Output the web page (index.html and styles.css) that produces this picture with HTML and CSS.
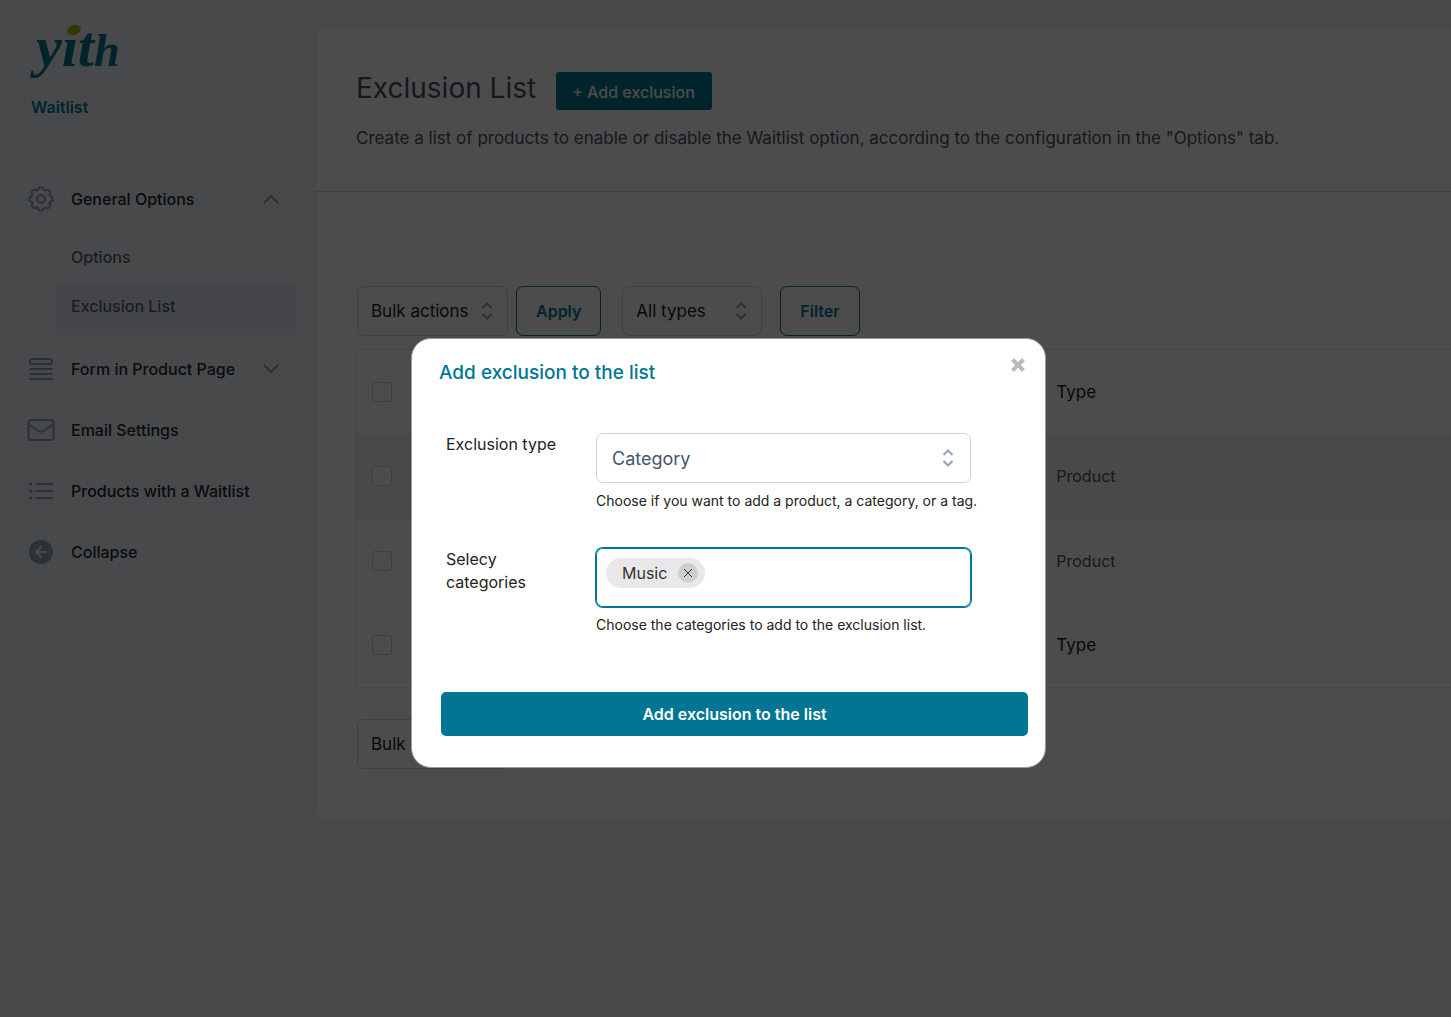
FILE: index.html
```html
<!DOCTYPE html>
<html lang="en">
<head>
    <meta charset="UTF-8">
    <meta name="viewport" content="width=device-width, initial-scale=1.0">
    <title>YITH Waitlist - Exclusion List</title>
    <link rel="stylesheet" href="styles.css">
</head>
<body>

    <div class="page">
        <!-- Sidebar -->
        <aside class="sidebar">
            <svg class="logo" width="94" height="60" viewBox="0 0 94 60">
                <text class="logo-text" x="8" y="39">yit<tspan class="logo-small">h</tspan></text>
                <ellipse cx="46" cy="3" rx="7" ry="5" transform="rotate(-20 46 3)" fill="#a4c400"/>
            </svg>
            <div class="plugin-name">Waitlist</div>

            <nav class="menu">
                <a href="#" class="menu-item">
                    <svg class="menu-icon" width="28" height="28" viewBox="-14 -14 28 28">
                        <path d="M-3-9-1.800-11.500H1.800L3-9 4.200-8.500 7-9.400 9.400-7 8.500-4.200 9-3 11.500-1.800V1.800L9 3 8.500 4.200 9.400 7 7 9.400 4.200 8.500 3 9 1.800 11.500H-1.800L-3 9-4.200 8.500-7 9.400-9.400 7-8.500 4.200-9 3-11.500 1.800V-1.800L-9-3-8.500-4.200-9.400-7-7-9.400-4.200-8.500z"/>
                        <circle r="4"/>
                    </svg>
                    <span>General Options</span>
                    <svg class="arrow" width="16" height="10" viewBox="0 0 16 10"><path d="M1.500 8.500 8 2l6.500 6.500"/></svg>
                </a>
                <div class="submenu">
                    <a href="#">Options</a>
                    <a href="#" class="active">Exclusion List</a>
                </div>
                <a href="#" class="menu-item">
                    <svg class="menu-icon" width="28" height="28" viewBox="0 0 28 28">
                        <rect x="3" y="4" width="22" height="5" rx="2"/>
                        <path d="M3 14h22M3 19h22M3 24h22"/>
                    </svg>
                    <span>Form in Product Page</span>
                    <svg class="arrow" width="16" height="10" viewBox="0 0 16 10"><path d="M1.500 1.500 8 8l6.500-6.500"/></svg>
                </a>
                <a href="#" class="menu-item">
                    <svg class="menu-icon" width="28" height="28" viewBox="0 0 28 28">
                        <rect x="1.500" y="4" width="25" height="20" rx="2.500"/>
                        <path d="M2 8.500l9.500 6.500q2.500 1.600 5 0L26 8.500"/>
                    </svg>
                    <span>Email Settings</span>
                </a>
                <a href="#" class="menu-item">
                    <svg class="menu-icon" width="28" height="28" viewBox="0 0 28 28">
                        <path d="M9 7h16M9 14h16M9 21h16"/>
                        <path d="M3.500 7h.5M3.500 14h.5M3.500 21h.5" stroke-width="3"/>
                    </svg>
                    <span>Products with a Waitlist</span>
                </a>
                <a href="#" class="menu-item">
                    <svg class="menu-icon" width="28" height="28" viewBox="0 0 28 28">
                        <circle cx="14" cy="14" r="12" fill="#94a3b8" stroke="none"/>
                        <path d="M19 14H9.500M14 9l-5 5 5 5" stroke="#f1f5f9"/>
                    </svg>
                    <span>Collapse</span>
                </a>
            </nav>
        </aside>

        <!-- Main panel -->
        <main class="panel">
            <header class="panel-header">
                <div class="title-row">
                    <h1>Exclusion List</h1>
                    <button class="add-button">+ Add exclusion</button>
                </div>
                <p>Create a list of products to enable or disable the Waitlist option, according to the configuration in the "Options" tab.</p>
            </header>

            <div class="panel-body">
                <div class="toolbar">
                    <div class="select-wrap bulk">
                        <select aria-label="Bulk actions"><option>Bulk actions</option></select>
                        <svg class="updown" width="12" height="18" viewBox="0 0 12 18"><path d="M1.500 6 6 1.500 10.500 6M1.500 12 6 16.500 10.500 12"/></svg>
                    </div>
                    <button class="outline-button apply">Apply</button>
                    <div class="select-wrap types">
                        <select aria-label="Type"><option>All types</option></select>
                        <svg class="updown" width="12" height="18" viewBox="0 0 12 18"><path d="M1.500 6 6 1.500 10.500 6M1.500 12 6 16.500 10.500 12"/></svg>
                    </div>
                    <button class="outline-button">Filter</button>
                </div>

                <table class="list">
                    <thead>
                        <tr>
                            <th class="col-check"><input type="checkbox" aria-label="Select all"></th>
                            <th class="col-name"></th>
                            <th>Type</th>
                        </tr>
                    </thead>
                    <tbody>
                        <tr class="striped">
                            <td><input type="checkbox" aria-label="Select row"></td>
                            <td></td>
                            <td>Product</td>
                        </tr>
                        <tr>
                            <td><input type="checkbox" aria-label="Select row"></td>
                            <td></td>
                            <td>Product</td>
                        </tr>
                    </tbody>
                    <tfoot>
                        <tr>
                            <th><input type="checkbox" aria-label="Select all"></th>
                            <th></th>
                            <th>Type</th>
                        </tr>
                    </tfoot>
                </table>

                <div class="toolbar">
                    <div class="select-wrap bulk">
                        <select aria-label="Bulk actions"><option>Bulk actions</option></select>
                    </div>
                </div>
            </div>
        </main>
    </div>

    <!-- Add exclusion modal -->
    <div class="overlay">
        <form class="modal" role="dialog" aria-labelledby="modalTitle">
            <div class="modal-header">
                <h2 id="modalTitle">Add exclusion to the list</h2>
                <button type="button" class="close" aria-label="Close">
                    <svg width="16" height="16" viewBox="0 0 16 16"><path d="M2.500 2.500l11 11M13.500 2.500l-11 11"/></svg>
                </button>
            </div>

            <div class="field">
                <label for="exclusionType">Exclusion type</label>
                <div class="control">
                    <div class="select-wrap">
                        <select id="exclusionType"><option>Category</option></select>
                        <svg class="updown" width="12" height="18" viewBox="0 0 12 18"><path d="M1.500 6 6 1.500 10.500 6M1.500 12 6 16.500 10.500 12"/></svg>
                    </div>
                    <p class="hint">Choose if you want to add a product, a category, or a tag.</p>
                </div>
            </div>

            <div class="field">
                <label for="categories">Selecy categories</label>
                <div class="control">
                    <div class="tag-box">
                        <span class="tag">Music
                            <button type="button" aria-label="Remove">
                                <svg width="10" height="10" viewBox="0 0 10 10"><path d="M1 1l8 8M9 1 1 9"/></svg>
                            </button>
                        </span>
                        <input type="text" id="categories">
                    </div>
                    <p class="hint">Choose the categories to add to the exclusion list.</p>
                </div>
            </div>

            <button type="submit" class="submit">Add exclusion to the list</button>
        </form>
    </div>

</body>
</html>
```
FILE: styles.css
```css
* {
    margin: 0;
    padding: 0;
    box-sizing: border-box;
}

body {
    min-height: 100vh;
    background-color: #f1f5f9;
    font-family: Inter, "Liberation Sans", sans-serif;
    font-size: 16px;
    color: #222;
    overflow-x: hidden;
}

button, input, select {
    font: inherit;
    color: inherit;
}

button {
    cursor: pointer;
}

a {
    color: inherit;
    text-decoration: none;
}

.page {
    display: flex;
    align-items: flex-start;
    padding-top: 27px;
}

/* Sidebar */
.sidebar {
    flex: 0 0 315px;
    padding-right: 19px;
}

.logo {
    display: block;
    margin-left: 28px;
    overflow: visible;
}

.logo-text {
    font-family: "Liberation Serif", serif;
    font-size: 58px;
    font-weight: bold;
    font-style: italic;
    fill: #007694;
}

.logo-small {
    font-size: 46px;
}

.plugin-name {
    margin: 10px 0 51px 31px;
    line-height: 20px;
    font-weight: 600;
    color: #007694;
}

.menu-item {
    display: flex;
    align-items: center;
    gap: 16px;
    height: 61px;
    padding: 0 17px 0 27px;
    font-weight: 500;
    color: #1e293b;
}

.menu-icon {
    fill: none;
    stroke: #94a3b8;
    stroke-width: 2;
    stroke-linecap: round;
    stroke-linejoin: round;
}

.arrow {
    margin-left: auto;
    fill: none;
    stroke: #94a3b8;
    stroke-width: 2;
    stroke-linecap: round;
}

.submenu {
    display: flex;
    flex-direction: column;
    gap: 3px;
    padding: 5px 0 9px 56px;
    font-weight: 500;
    color: #566377;
}

.submenu a {
    padding: 0 15px;
    line-height: 46px;
}

.submenu .active {
    background-color: #e4e8f0;
}

/* Main panel */
.panel {
    flex: 1;
    background-color: #fff;
    border: 1px solid #e2e8f0;
    border-right: none;
    border-radius: 10px 0 0 10px;
}

.panel-header {
    padding: 44px 40px 41px;
    border-bottom: 1px solid #cbd5e1;
    color: #475569;
}

.title-row {
    display: flex;
    gap: 20px;
    margin-bottom: 16px;
}

h1 {
    line-height: 32px;
    font-size: 28px;
    font-weight: 400;
}

.add-button {
    height: 38px;
    padding: 2px 17px 0 16px;
    background-color: #007694;
    color: #fff;
    border: none;
    border-radius: 3px;
    font-weight: 500;
}

.panel-header p {
    line-height: 24px;
    font-size: 17px;
}

.panel-body {
    padding: 94px 0 52px 40px;
}

.toolbar {
    display: flex;
    gap: 8px;
    padding-left: 1px;
    font-size: 17px;
}

.select-wrap {
    position: relative;
}

.select-wrap select {
    width: 100%;
    height: 50px;
    padding: 0 13px;
    appearance: none;
    background-color: #fff;
    border: 1px solid #cbd5e1;
    border-radius: 7px;
}

.updown {
    position: absolute;
    top: 16px;
    right: 15px;
    fill: none;
    stroke: #94a3b8;
    stroke-width: 2;
    pointer-events: none;
}

.bulk {
    width: 151px;
}

.types {
    width: 140px;
    margin-right: 10px;
}

.outline-button {
    height: 50px;
    padding: 0 19px;
    background-color: #fff;
    border: 1px solid #007694;
    border-radius: 7px;
    font-size: 16px;
    font-weight: 600;
    color: #007694;
}

.apply {
    margin-right: 13px;
}

.list {
    width: 100%;
    margin: 13px 0 31px;
    table-layout: fixed;
    border-collapse: collapse;
    border: 1px solid #e5e7eb;
    border-right: none;
}

.list th,
.list td {
    height: 84px;
    padding: 0 15px;
    text-align: left;
    font-weight: 400;
}

.list td {
    height: 85px;
    color: #555;
}

.list .col-check {
    width: 50px;
}

.list .col-name {
    width: 58%;
}

.list th {
    font-size: 17px;
}

.striped {
    background-color: #f3f3f3;
}

.list input {
    display: block;
    width: 20px;
    height: 20px;
    appearance: none;
    background-color: #fff;
    border: 1px solid #cbd5e1;
    border-radius: 3px;
}

/* Modal */
.overlay {
    position: fixed;
    inset: 0;
    display: flex;
    justify-content: center;
    align-items: flex-start;
    padding: 338px 0 0 6px;
    background-color: rgba(0, 0, 0, 0.7);
}

.modal {
    width: 635px;
    padding: 14px 17px 31px 29px;
    background-color: #fff;
    border: 1px solid #999;
    border-radius: 20px;
}

.modal-header {
    display: flex;
    justify-content: space-between;
    align-items: flex-start;
    margin: 0 0 46px -2px;
}

h2 {
    padding-top: 6px;
    line-height: 28px;
    font-size: 19px;
    font-weight: 500;
    color: #007694;
}

.close {
    width: 20px;
    height: 24px;
    background: none;
    border: none;
}

.close svg {
    display: block;
    margin: auto;
    fill: none;
    stroke: #b9b9b9;
    stroke-width: 4;
}

.field {
    display: flex;
    justify-content: space-between;
    margin-bottom: 36px;
    padding: 0 57px 0 5px;
}

.field label {
    width: 120px;
    line-height: 23px;
}

.control {
    width: 375px;
}

.control .select-wrap {
    font-size: 18px;
    color: #475569;
}

.control .select-wrap select {
    padding: 0 15px;
}

.control .updown {
    right: 17px;
}

.hint {
    margin-top: 6px;
    line-height: 23px;
    font-size: 14px;
    white-space: nowrap;
}

.tag-box {
    display: flex;
    align-items: flex-start;
    height: 59px;
    padding: 9px;
    border: 1px solid #007694;
    border-radius: 7px;
    box-shadow: 0 0 0 1px #007694;
}

.tag {
    display: flex;
    align-items: center;
    gap: 11px;
    height: 30px;
    padding: 0 7px 0 16px;
    background-color: #e8e8e8;
    border-radius: 15px;
    color: #333;
}

.tag button {
    display: flex;
    justify-content: center;
    align-items: center;
    width: 20px;
    height: 20px;
    background-color: #cfcfcf;
    border: none;
    border-radius: 50%;
}

.tag svg {
    fill: none;
    stroke: #333;
}

.tag-box input {
    flex: 1;
    min-width: 0;
    height: 30px;
    border: none;
    outline: none;
}

.submit {
    width: 100%;
    height: 44px;
    margin-top: 20px;
    background-color: #007694;
    color: #fff;
    border: none;
    border-radius: 5px;
    font-weight: 600;
}
```
